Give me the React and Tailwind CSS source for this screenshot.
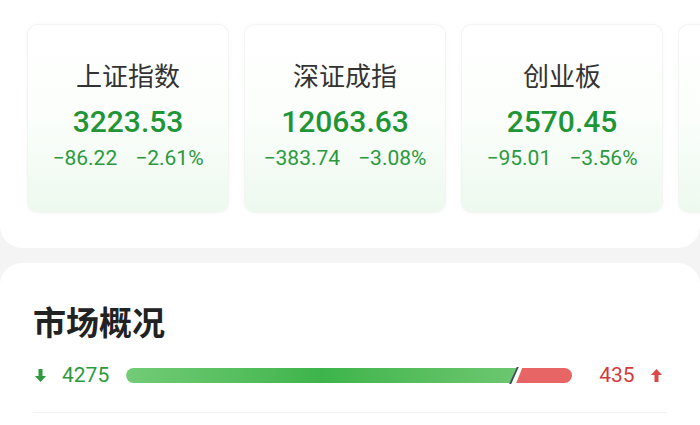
import React from 'react';

const indices = [
  { name: '上证指数', value: '3223.53', change: '−86.22', pct: '−2.61%' },
  { name: '深证成指', value: '12063.63', change: '−383.74', pct: '−3.08%' },
  { name: '创业板', value: '2570.45', change: '−95.01', pct: '−3.56%' },
];

const cjk = { fontFamily: '"Noto Sans CJK SC", "Noto Sans", sans-serif' };
const num = { fontFamily: 'Roboto, "Noto Sans", sans-serif' };

const cardBase =
  'flex h-[187px] w-[200px] shrink-0 flex-col items-center rounded-[10px] bg-gradient-to-b from-white via-[#fbfefb] to-[#edf9ef] shadow-[0_0_6px_rgba(0,0,0,0.04)] ring-1 ring-[#f3f5f3]';

function IndexCard({ item }) {
  return (
    <div className={`${cardBase} pt-[33px]`}>
      <div className="text-[26px] leading-[34px] text-[#333]" style={cjk}>{item.name}</div>
      <div className="mt-[12px] text-[30px] font-medium leading-[36px] text-[#1f9535]" style={num}>{item.value}</div>
      <div className="mt-[4px] flex gap-[18px] text-[21px] leading-[28px] text-[#2a9a3c]" style={num}>
        <span>{item.change}</span>
        <span>{item.pct}</span>
      </div>
    </div>
  );
}

function Arrow({ up, color }) {
  return (
    <svg width="11" height="13" viewBox="0 0 11 13" className={up ? '' : 'rotate-180'}>
      <path d="M5.5 0 L11 6 H7.5 V13 H3.5 V6 H0 Z" fill={color} />
    </svg>
  );
}

function BreadthBar({ down, up }) {
  return (
    <div className="flex items-center px-[35px] pt-[24px]">
      <Arrow up={false} color="#2e9b3e" />
      <span className="ml-[16px] text-[21px] leading-none text-[#2a9a3c]" style={num}>{down}</span>
      <div className="ml-[17px] flex h-[15px] w-[446px] items-center">
        <div className="h-full flex-1 rounded-l-full bg-gradient-to-r from-[#72cc76] via-[#3db44b] to-[#6cc76f] [clip-path:polygon(0_0,100%_0,calc(100%-6px)_100%,0_100%)]" />
        <div className="-ml-[3px] h-[17px] w-[2px] skew-x-[-24deg] bg-[#3a4a5a]" />
        <div className="ml-px h-full w-[56px] rounded-r-full bg-[#e86565] [clip-path:polygon(6px_0,100%_0,100%_100%,0_100%)]" />
      </div>
      <span className="ml-[27px] text-[21px] leading-none text-[#d23b3b]" style={num}>{up}</span>
      <span className="ml-[16px]">
        <Arrow up color="#e04646" />
      </span>
    </div>
  );
}

export default function App() {
  return (
    <div className="h-[425px] w-[700px] overflow-hidden bg-[#f4f4f4]">
      <section className="h-[248px] overflow-hidden rounded-b-[22px] bg-white pt-[25px]">
        <div className="flex gap-[17px] pl-[28px]">
          {indices.map((item) => (
            <IndexCard key={item.name} item={item} />
          ))}
          <div className={cardBase} />
        </div>
      </section>

      <section className="mt-[15px] h-[200px] rounded-t-[22px] bg-white pt-[38px]">
        <h2 className="px-[33px] text-[33px] font-bold leading-[40px] text-[#222]" style={cjk}>市场概况</h2>
        <BreadthBar down="4275" up="435" />
        <div className="mx-[33px] mt-[26px] h-px bg-[#f2f2f2]" />
      </section>
    </div>
  );
}
